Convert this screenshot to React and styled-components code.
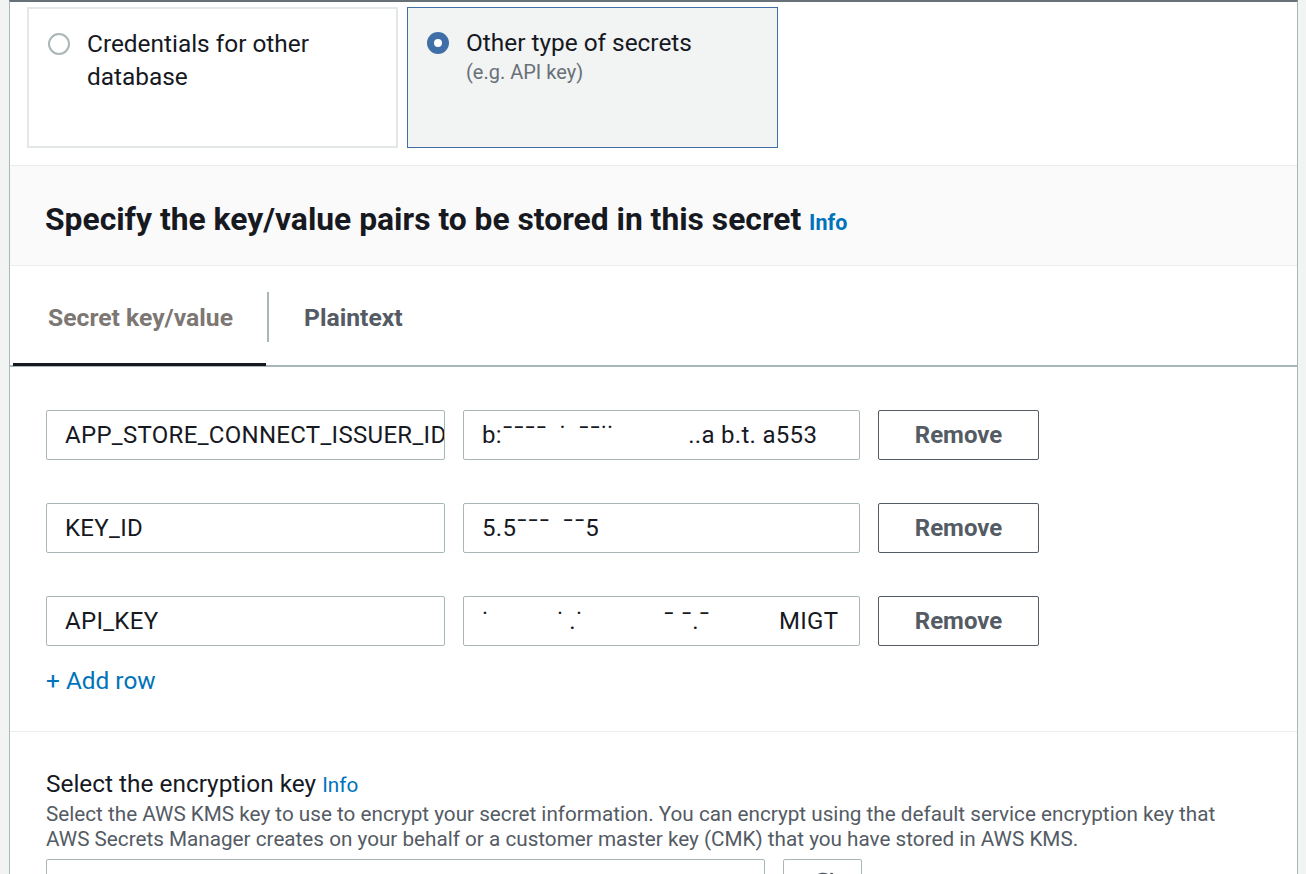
import React, { useState } from "react";
import styled, { createGlobalStyle } from "styled-components";

const GlobalStyle = createGlobalStyle`
  body {
    margin: 0;
    background: #f2f3f3;
    font-family: Roboto, "Noto Sans", sans-serif;
    color: #16191f;
    overflow: hidden;
  }
`;

const rows = [
  { key: "APP_STORE_CONNECT_ISSUER_ID", value: "b:¯¯¯¯  ˙  ¯¯˙˙            ..a b.t. a553" },
  { key: "KEY_ID", value: "5.5¯¯¯  ¯¯5" },
  { key: "API_KEY", value: "˙           ˙ .˙             ¯ ¯.¯           MIGT" },
];

const App = () => {
  const [secretType, setSecretType] = useState("other");
  const [tab, setTab] = useState("kv");

  return (
    <>
      <GlobalStyle />
      <Page>
        <Panel>
          <Tiles>
            <Tile
              selected={secretType === "db"}
              onClick={() => setSecretType("db")}
            >
              <Radio checked={secretType === "db"} />
              <TileText>
                <TileLabel>Credentials for other database</TileLabel>
              </TileText>
            </Tile>
            <Tile
              selected={secretType === "other"}
              onClick={() => setSecretType("other")}
            >
              <Radio checked={secretType === "other"} />
              <TileText>
                <TileLabel>Other type of secrets</TileLabel>
                <TileDesc>(e.g. API key)</TileDesc>
              </TileText>
            </Tile>
          </Tiles>

          <SectionHeader>
            <Heading>
              Specify the key/value pairs to be stored in this secret{" "}
              <InfoLink>Info</InfoLink>
            </Heading>
          </SectionHeader>

          <TabBar>
            <Tab active={tab === "kv"} onClick={() => setTab("kv")}>
              Secret key/value
            </Tab>
            <TabDivider />
            <Tab active={tab === "plain"} onClick={() => setTab("plain")}>
              Plaintext
            </Tab>
          </TabBar>

          <Rows>
            {rows.map((row) => (
              <Row key={row.key}>
                <Field>{row.key}</Field>
                <Field>{row.value}</Field>
                <RemoveButton>Remove</RemoveButton>
              </Row>
            ))}
            <AddRow>+ Add row</AddRow>
          </Rows>

          <Encryption>
            <FieldTitle>
              Select the encryption key <SmallInfo>Info</SmallInfo>
            </FieldTitle>
            <FieldDesc>
              Select the AWS KMS key to use to encrypt your secret information.
              You can encrypt using the default service encryption key that AWS
              Secrets Manager creates on your behalf or a customer master key
              (CMK) that you have stored in AWS KMS.
            </FieldDesc>
            <SelectRow>
              <SelectBox />
              <IconButton>
                <svg width="26" height="26" viewBox="0 0 24 24" fill="none">
                  <path
                    d="M20 12a8 8 0 1 1-2.3-5.6M20 4v4h-4"
                    stroke="#545b64"
                    strokeWidth="3"
                    strokeLinecap="round"
                  />
                </svg>
              </IconButton>
            </SelectRow>
          </Encryption>
        </Panel>
      </Page>
    </>
  );
};

export default App;

const Page = styled.div`
  padding: 0 8px 0 9px;
  height: 874px;
`;

const Panel = styled.div`
  background: #fff;
  border-top: 2px solid #687078;
  border-left: 1px solid #aab7b8;
  border-right: 1px solid #aab7b8;
  min-height: 100%;
`;

const Tiles = styled.div`
  display: flex;
  gap: 9px;
  padding: 5px 17px 17px 17px;
`;

const Tile = styled.div`
  width: 371px;
  height: 141px;
  box-sizing: border-box;
  display: flex;
  align-items: flex-start;
  gap: 17px;
  padding: 23px 0 0 19px;
  border: ${(p) => (p.selected ? "1px solid #3f6fa6" : "2px solid #e3e7e7")};
  background: ${(p) => (p.selected ? "#f2f3f3" : "#fff")};
  cursor: pointer;
`;

const Radio = styled.span`
  flex: none;
  width: 22px;
  height: 22px;
  margin-top: 1px;
  box-sizing: border-box;
  border-radius: 50%;
  background: #fff;
  border: ${(p) => (p.checked ? "7px solid #3f6fa6" : "2px solid #aab7b8")};
`;

const TileText = styled.div`
  display: flex;
  flex-direction: column;
`;

const TileLabel = styled.span`
  font-size: 24.4px;
  line-height: 33px;
  color: #16191f;
  width: 250px;
  margin-top: -5px;
`;

const TileDesc = styled.span`
  font-size: 20px;
  line-height: 26px;
  color: #687078;
`;

const SectionHeader = styled.div`
  height: 99px;
  display: flex;
  align-items: center;
  padding-left: 35px;
  background: #fafafa;
  border-top: 1px solid #eaeded;
  border-bottom: 1px solid #eaeded;
`;

const Heading = styled.h2`
  margin: 6px 0 0 0;
  font-size: 31.8px;
  font-weight: 700;
  color: #16191f;
`;

const InfoLink = styled.a`
  font-size: 21.5px;
  font-weight: 700;
  color: #0073bb;
  cursor: pointer;
`;

const TabBar = styled.div`
  display: flex;
  align-items: center;
  padding-left: 3px;
  height: 99px;
  border-bottom: 2px solid #aab7b8;
`;

const Tab = styled.button`
  height: 100%;
  padding: 4px 35px 0 35px;
  background: none;
  border: none;
  border-bottom: 3px solid ${(p) => (p.active ? "#16191f" : "transparent")};
  margin-bottom: -2px;
  font-family: inherit;
  font-size: 24.7px;
  font-weight: 700;
  color: ${(p) => (p.active ? "#7d7774" : "#545b64")};
  cursor: pointer;
  width: ${(p) => (p.active ? "253px" : "auto")};
  text-align: left;
  white-space: nowrap;
  box-sizing: border-box;
`;

const TabDivider = styled.span`
  width: 2px;
  height: 50px;
  background: #aab7b8;
  margin-top: 2px;
  margin-left: 1px;
`;

const Rows = styled.div`
  display: flex;
  flex-direction: column;
  gap: 43px;
  padding: 43px 0 0 36px;
  height: 365px;
  box-sizing: border-box;
  border-bottom: 1px solid #eaeded;
`;

const Row = styled.div`
  display: flex;
  gap: 18px;
`;

const Field = styled.div`
  width: 399px;
  height: 50px;
  box-sizing: border-box;
  border: 1px solid #aab7b8;
  border-radius: 2px;
  padding: 0 0 0 18px;
  display: flex;
  align-items: center;
  font-size: 24px;
  letter-spacing: 0.3px;
  color: #16191f;
  white-space: pre;
  overflow: hidden;
  & + & {
    width: 397px;
  }
`;

const RemoveButton = styled.button`
  width: 161px;
  height: 50px;
  border: 1px solid #545b64;
  border-radius: 2px;
  background: #fff;
  font-family: inherit;
  font-size: 24px;
  font-weight: 700;
  color: #545b64;
  cursor: pointer;
`;

const AddRow = styled.a`
  margin-top: -23px;
  font-size: 24.4px;
  color: #0073bb;
  cursor: pointer;
`;

const Encryption = styled.div`
  padding: 38px 0 0 36px;
`;

const FieldTitle = styled.div`
  font-size: 24.4px;
  line-height: 28px;
  color: #16191f;
`;

const SmallInfo = styled.a`
  font-size: 20.7px;
  color: #0073bb;
  cursor: pointer;
`;

const FieldDesc = styled.div`
  margin-top: 3px;
  font-size: 20.7px;
  line-height: 25px;
  color: #545b64;
  max-width: 1200px;
`;

const SelectRow = styled.div`
  display: flex;
  gap: 18px;
  margin-top: 7px;
`;

const SelectBox = styled.div`
  width: 719px;
  height: 50px;
  border: 1px solid #aab7b8;
  border-radius: 2px;
  box-sizing: border-box;
`;

const IconButton = styled.button`
  width: 79px;
  height: 50px;
  border: 1px solid #aab7b8;
  border-radius: 2px;
  background: #fff;
  display: flex;
  align-items: center;
  justify-content: center;
  padding-bottom: 4px;
`;
